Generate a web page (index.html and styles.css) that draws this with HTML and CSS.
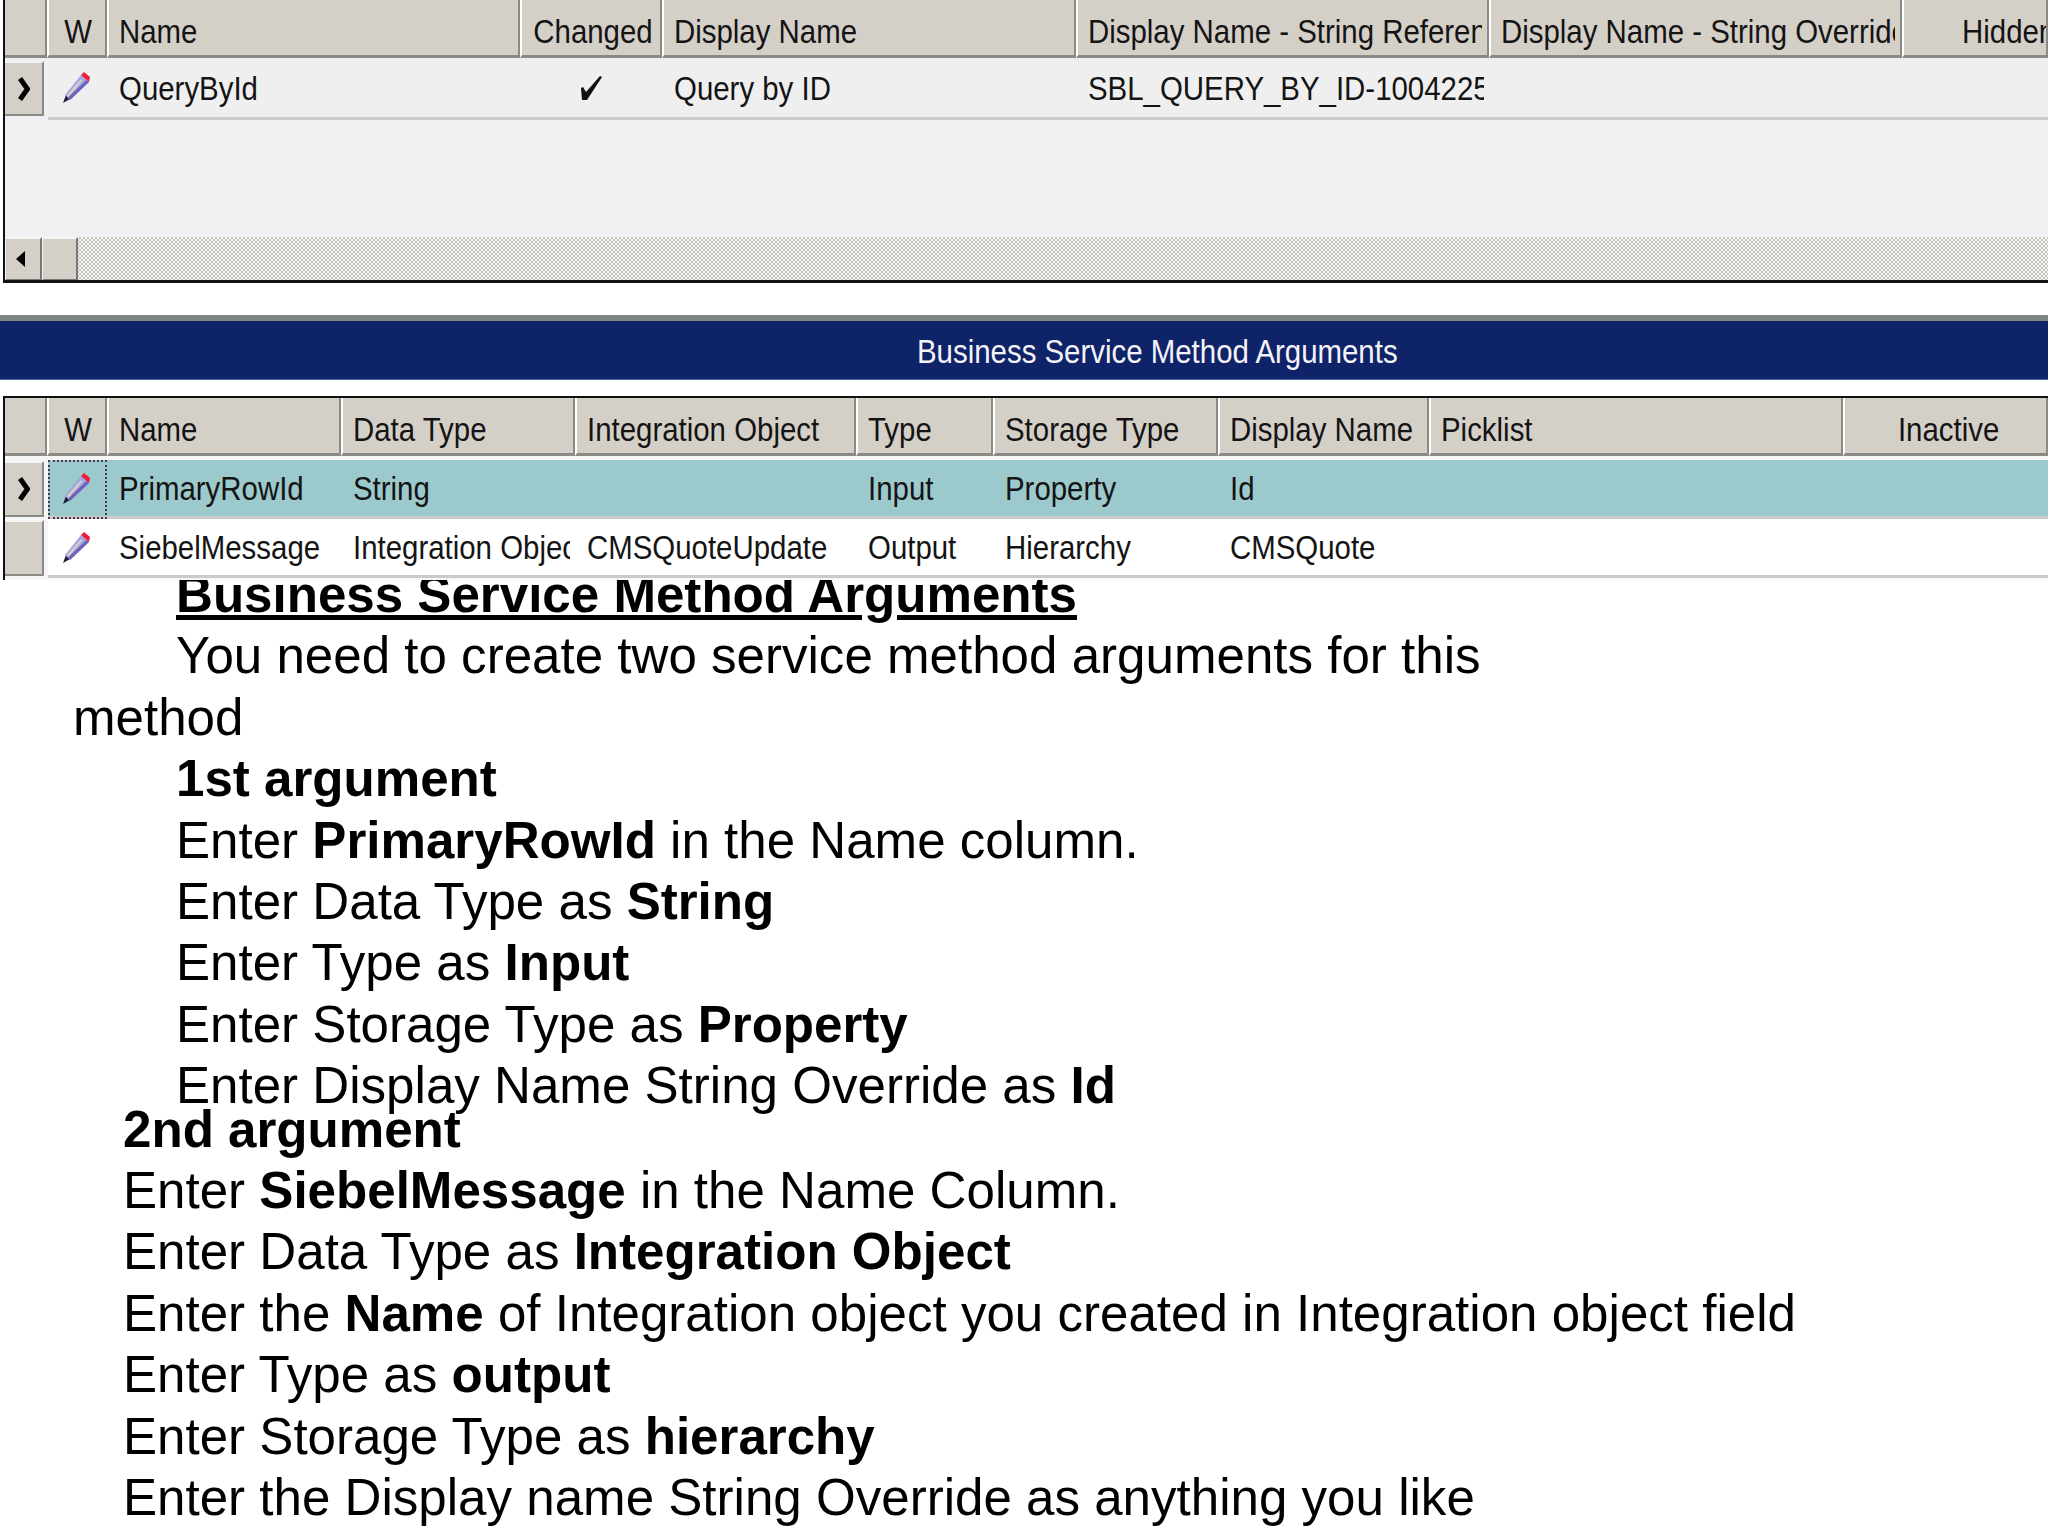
FILE: index.html
```html
<!DOCTYPE html>
<html lang="en">
<head>
<meta charset="utf-8">
<title>Business Service Method Arguments</title>
<link rel="stylesheet" href="styles.css">
</head>
<body>
<svg class="defs" width="0" height="0" aria-hidden="true">
  <symbol id="pencil" viewBox="0 0 28 32">
    <path d="M1 31 L4 23 L8 27 Z" fill="#1c1c30"/>
    <path d="M3 23 L19 3 L27 10 L8 28 Z" fill="#a3a3ec"/>
    <path d="M8 28 L27 10 L24.500 8 L6 25.500 Z" fill="#6c64b8"/>
    <path d="M5 23 L19 7 L20.500 8.500 L6.500 25 Z" fill="#dccfbc"/>
    <path d="M19 3 L22 0 L28 5 L27 10 Z" fill="#f01c38"/>
  </symbol>
  <symbol id="chevron" viewBox="0 0 12 24">
    <path d="M2 1.500 L9.500 12 L2 22.500" fill="none" stroke="#000" stroke-width="5"/>
  </symbol>
  <symbol id="check" viewBox="0 0 23 25">
    <path d="M1 12 L3 11 L6 16 L20 0 L22 1 L7 24 L2 24 Z" fill="#111"/>
  </symbol>
</svg>

<section class="grid grid-top">
  <div class="row head cols-top">
    <div class="cell blank"></div>
    <div class="cell center nudge-w"><span class="t">W</span></div>
    <div class="cell"><span class="t">Name</span></div>
    <div class="cell center nudge-c"><span class="t">Changed</span></div>
    <div class="cell"><span class="t">Display Name</span></div>
    <div class="cell"><span class="t">Display Name - String Reference</span></div>
    <div class="cell"><span class="t">Display Name - String Override</span></div>
    <div class="cell pad-hidden"><span class="t">Hidden</span></div>
  </div>
  <div class="row body-row plain cols-top">
    <div class="selector current"><svg class="chev"><use href="#chevron"/></svg></div>
    <div class="data icon mark"><svg class="pen"><use href="#pencil"/></svg></div>
    <div class="data"><span class="t">QueryById</span></div>
    <div class="data icon"><svg class="tick"><use href="#check"/></svg></div>
    <div class="data"><span class="t">Query by ID</span></div>
    <div class="data"><span class="t">SBL_QUERY_BY_ID-100422511</span></div>
    <div class="data"></div>
    <div class="data"></div>
  </div>
  <div class="empty"></div>
  <div class="scrollbar">
    <div class="scroll-btn"><span class="arrow-left"></span></div>
    <div class="scroll-thumb"></div>
  </div>
</section>

<h2 class="title-bar"><span class="t">Business Service Method Arguments</span></h2>

<section class="grid grid-bottom">
  <div class="row head cols-bottom">
    <div class="cell blank"></div>
    <div class="cell center nudge-w"><span class="t">W</span></div>
    <div class="cell"><span class="t">Name</span></div>
    <div class="cell"><span class="t">Data Type</span></div>
    <div class="cell"><span class="t">Integration Object</span></div>
    <div class="cell"><span class="t">Type</span></div>
    <div class="cell"><span class="t">Storage Type</span></div>
    <div class="cell"><span class="t">Display Name</span></div>
    <div class="cell"><span class="t">Picklist</span></div>
    <div class="cell center nudge-i"><span class="t">Inactive</span></div>
  </div>
  <div class="row body-row selected cols-bottom">
    <div class="selector current"><svg class="chev"><use href="#chevron"/></svg></div>
    <div class="data icon mark focus"><svg class="pen"><use href="#pencil"/></svg></div>
    <div class="data"><span class="t">PrimaryRowId</span></div>
    <div class="data"><span class="t">String</span></div>
    <div class="data"></div>
    <div class="data"><span class="t">Input</span></div>
    <div class="data"><span class="t">Property</span></div>
    <div class="data"><span class="t">Id</span></div>
    <div class="data"></div>
    <div class="data"></div>
  </div>
  <div class="row body-row white cols-bottom">
    <div class="selector"></div>
    <div class="data icon mark"><svg class="pen"><use href="#pencil"/></svg></div>
    <div class="data"><span class="t">SiebelMessage</span></div>
    <div class="data"><span class="t">Integration Object</span></div>
    <div class="data"><span class="t">CMSQuoteUpdate</span></div>
    <div class="data"><span class="t">Output</span></div>
    <div class="data"><span class="t">Hierarchy</span></div>
    <div class="data"><span class="t">CMSQuote</span></div>
    <div class="data"></div>
    <div class="data"></div>
  </div>
</section>

<main class="notes">
  <div class="notes-inner">
    <div class="block-one">
      <p class="heading">Business Service Method Arguments</p>
      <p>You need to create two service method arguments for this</p>
      <p class="outdent">method</p>
      <p><b>1st argument</b></p>
      <p>Enter <b>PrimaryRowId</b> in the Name column.</p>
      <p>Enter Data Type as <b>String</b></p>
      <p>Enter Type as <b>Input</b></p>
      <p>Enter Storage Type as <b>Property</b></p>
      <p>Enter Display Name String Override as <b>Id</b></p>
    </div>
    <div class="block-two">
      <p><b>2nd argument</b></p>
      <p>Enter <b>SiebelMessage</b> in the Name Column.</p>
      <p>Enter Data Type as <b>Integration Object</b></p>
      <p>Enter the <b>Name</b> of Integration object you created in Integration object field</p>
      <p>Enter Type as <b>output</b></p>
      <p>Enter Storage Type as <b>hierarchy</b></p>
      <p>Enter the Display name String Override as anything you like</p>
    </div>
  </div>
</main>
</body>
</html>
```

FILE: styles.css
```css
* { box-sizing: border-box; }
html, body { margin: 0; padding: 0; background: #fff; }
body { width: 2048px; height: 1536px; overflow: hidden; font-family: "Liberation Sans", Arial, sans-serif; color: #000; }
.defs { position: absolute; }

.t { display: inline-block; white-space: nowrap; transform: scaleX(0.865); transform-origin: left center; }
.center .t { transform-origin: center; }

.grid { margin-left: 3px; border-left: 2px solid #111; overflow: hidden; font-size: 34px; color: #141414; }
.grid-top { height: 283px; border-bottom: 3px solid #111; background: #f0f0f2; }
.grid-bottom { margin-top: 16px; height: 184px; border-top: 2px solid #111; background: #f6f6f6; }

.row { display: grid; }
.cols-top { grid-template-columns: 42px 60px 413px 142px 414px 413px 413px 146px; }
.cols-bottom { grid-template-columns: 42px 60px 234px 234px 281px 137px 225px 211px 414px 205px; }

.head { height: 58px; }
.grid-bottom .head { margin-bottom: 4px; }
.cell { position: relative; background: #d4d0c8; border-left: 2px solid #fff; border-right: 2px solid #8a8a86; border-bottom: 3px solid #8a8a86; padding: 7px 0 0 10px; display: flex; align-items: center; white-space: nowrap; overflow: hidden; min-width: 0; }
.cell.blank { border-left: 0; }
.cell::after, .data::after { content: ""; position: absolute; top: 0; right: 0; bottom: 0; width: 5px; background: inherit; }
.center { justify-content: center; padding-left: 0; }
.nudge-w { padding-left: 3px; }
.nudge-c { padding-left: 4px; }
.nudge-i { padding-left: 6px; }
.pad-hidden { padding-left: 58px; }
.pad-hidden::after { display: none; }

.plain { height: 62px; }
.plain .data { background: #efeff0; }
.selected { height: 59px; }
.selected .data { background: #9ccacc; }
.white { height: 59px; }
.white .data { background: #fff; }
.data { position: relative; display: flex; align-items: center; padding: 1px 0 0 12px; border-bottom: 3px solid #cbcbcb; white-space: nowrap; overflow: hidden; min-width: 0; }
.icon { justify-content: center; padding-left: 0; }
.mark { margin-left: 1px; }
.focus { outline: 2px dotted #4a3a4a; outline-offset: -2px; }
.focus::after { display: none; }

.selector { background: #d4d0c8; border-top: 2px solid #f4f4f4; border-right: 2px solid #8a8a86; border-bottom: 2px solid #8a8a86; margin: 1px 3px 2px 0; display: flex; align-items: center; justify-content: center; }
.grid-top .selector { margin-top: 3px; margin-bottom: 4px; }

.chev { width: 12px; height: 24px; }
.pen { width: 28px; height: 32px; margin-right: 4px; }
.tick { width: 23px; height: 25px; }

.empty { height: 117px; }
.scrollbar { height: 44px; display: flex; background: repeating-conic-gradient(#c6c3bc 0 25%, #f6f6f4 0 50%) 0 0 / 4px 4px; }
.scroll-btn, .scroll-thumb { background: #d4d0c8; border-top: 2px solid #f4f4f4; border-left: 1px solid #f4f4f4; border-right: 2px solid #777; border-bottom: 2px solid #777; }
.scroll-btn { width: 37px; display: flex; align-items: center; justify-content: center; padding-right: 6px; }
.scroll-thumb { width: 36px; }
.arrow-left { width: 0; height: 0; border-top: 8px solid transparent; border-bottom: 8px solid transparent; border-right: 9px solid #000; }

.title-bar { margin: 32px 0 0; height: 65px; background: #0e2368; border-top: 6px solid #7f8684; border-bottom: 1px solid #4a6aa8; padding: 3px 0 0 917px; display: flex; align-items: center; color: #f4f4f8; font-weight: 400; font-size: 34px; white-space: nowrap; }

.notes { height: 958px; overflow: hidden; font-size: 51.100px; line-height: 61.400px; }
.notes-inner { margin-top: -16px; }
.notes p { margin: 0; white-space: nowrap; }
.block-one { padding-left: 176px; }
.outdent { margin-left: -103px !important; }
.heading { font-weight: 700; text-decoration: underline; }
.block-two { padding-left: 123px; margin-top: -18px; }
```
